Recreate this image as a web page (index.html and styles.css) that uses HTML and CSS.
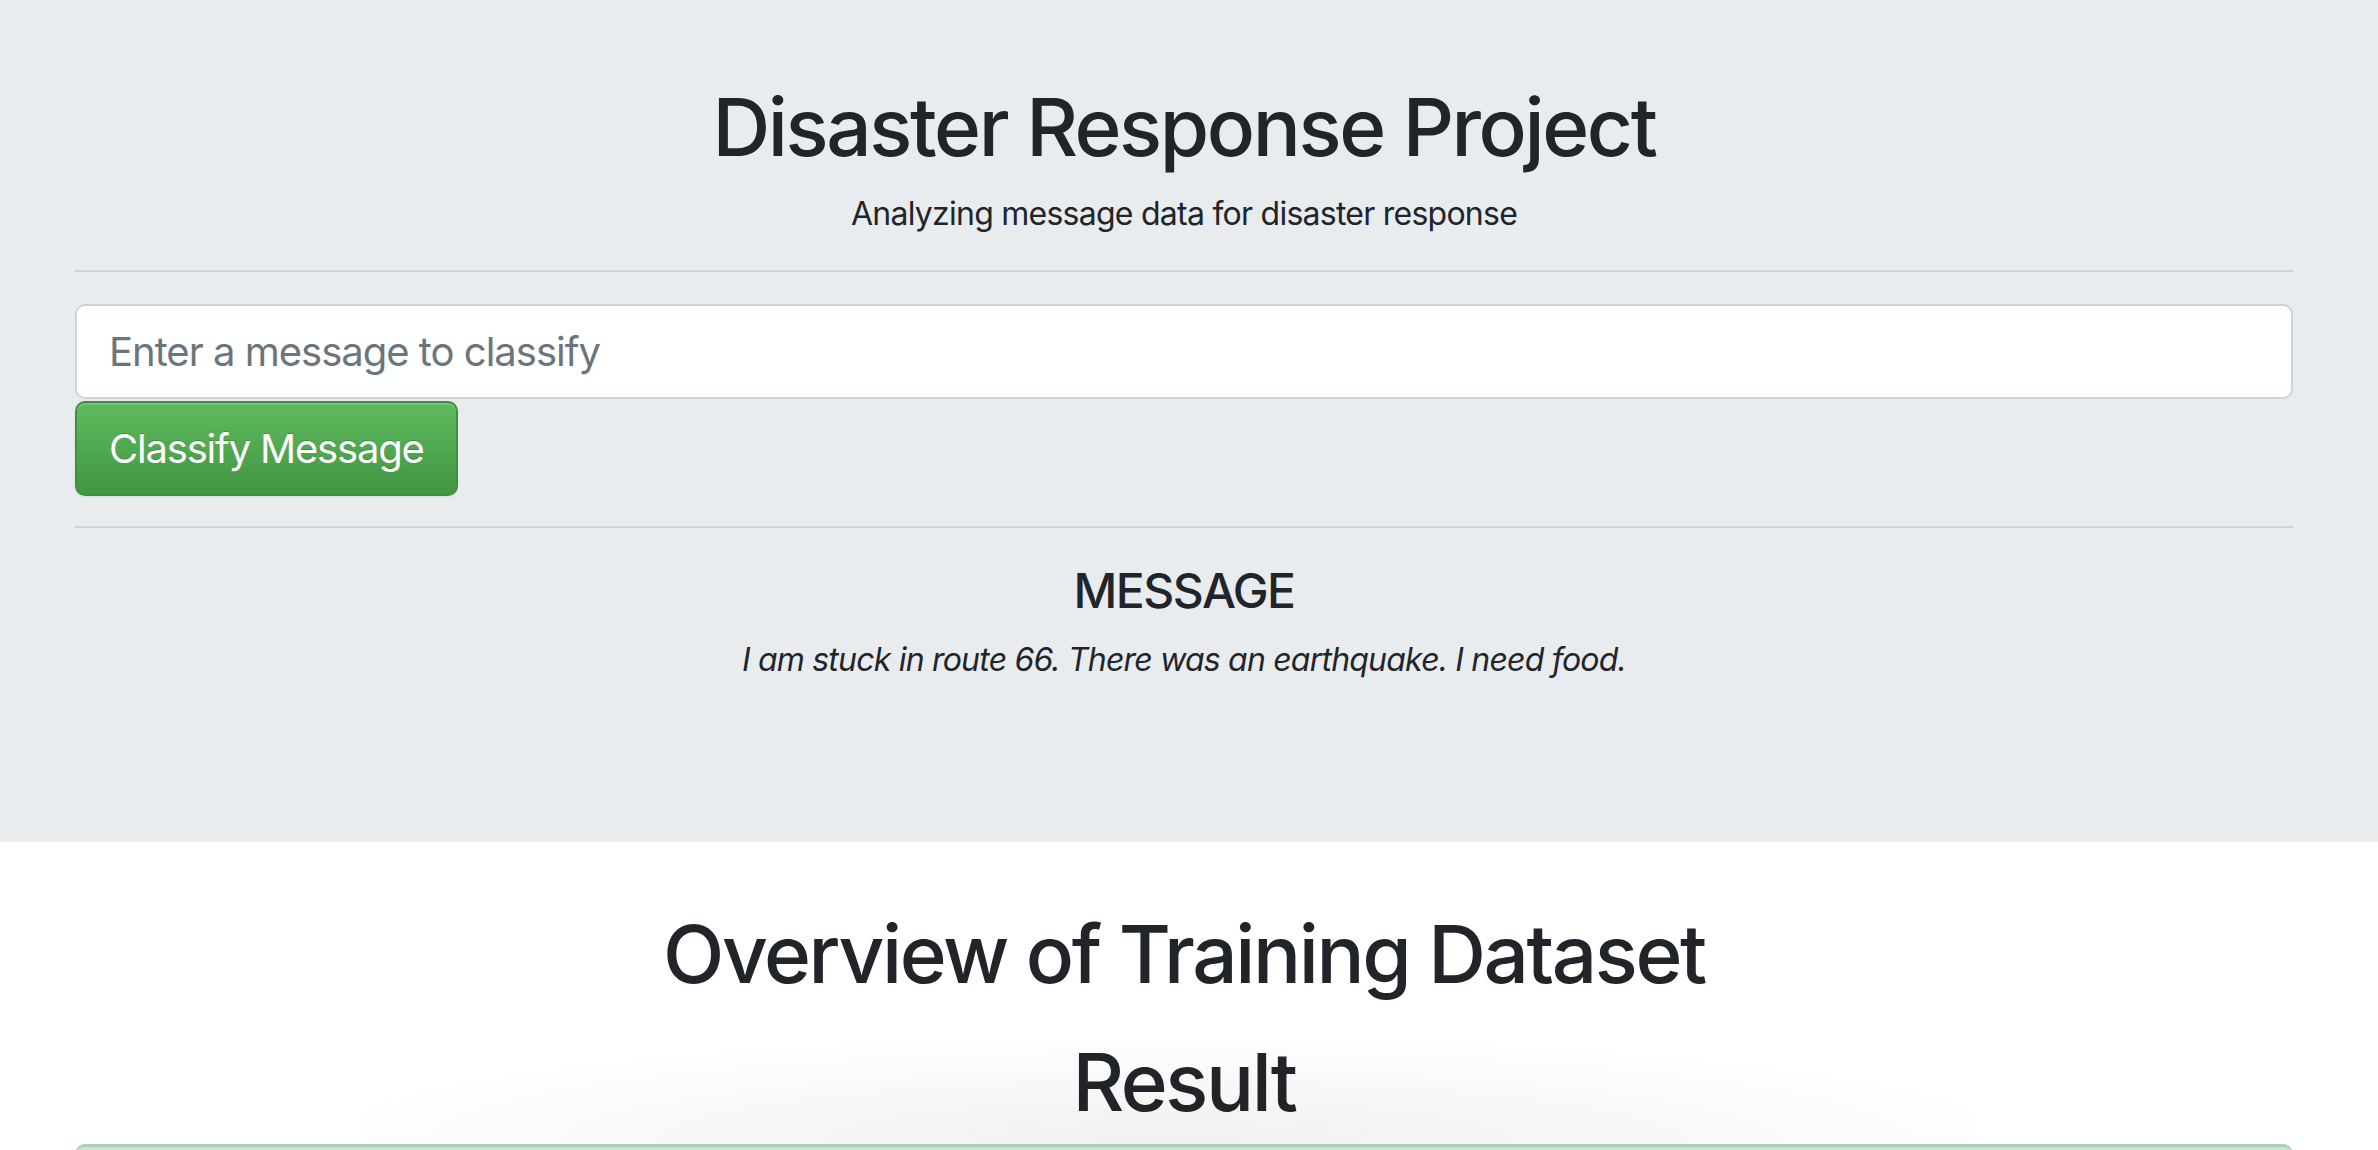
FILE: index.html
```html
<!DOCTYPE html>
<html lang="en">
<head>
<meta charset="utf-8">
<title>Disaster Response Project</title>
<link rel="stylesheet" href="styles.css">
</head>
<body>
<header class="jumbotron">
  <div class="container">
    <h1 class="title">Disaster Response Project</h1>
    <p class="lead">Analyzing message data for disaster response</p>
    <hr class="rule">
    <form class="classify-form">
      <input class="form-input" type="text" name="query" placeholder="Enter a message to classify">
      <button class="btn-success" type="button">Classify Message</button>
    </form>
    <hr class="rule rule-bottom">
    <h4 class="msg-label">MESSAGE</h4>
    <p class="msg-text">I am stuck in route 66. There was an earthquake. I need food.</p>
  </div>
</header>
<main class="container main">
  <h1 class="section-title">Overview of Training Dataset</h1>
  <h1 class="section-title result-title">Result</h1>
  <div class="result-wrap">
    <div class="shadow-glow"></div>
    <div class="alert-success"></div>
  </div>
</main>
</body>
</html>
```

FILE: styles.css
```css
* { box-sizing: border-box; }
html, body { margin: 0; padding: 0; }
body {
  font-family: Inter, "Noto Sans", "Liberation Sans", sans-serif;
  font-size: 32px;
  line-height: 1.5;
  color: #212529;
  background: #fff;
  overflow: hidden;
}
.container {
  padding-left: 75px;
  padding-right: 85px;
}
.jumbotron {
  background: #e9ecef;
  height: 842px;
  padding-top: 79px;
}
.title {
  margin: 0;
  text-align: center;
  font-size: 80px;
  font-weight: 500;
  line-height: 1.2;
  letter-spacing: -2.4px;
}
.lead {
  margin: 15px 0 0;
  text-align: center;
  font-size: 32px;
  line-height: 48px;
  letter-spacing: -0.75px;
}
.rule {
  margin: 32px 0 0;
  border: 0;
  border-top: 2px solid rgba(0,0,0,0.1);
  height: 0;
}
.classify-form {
  display: flex;
  flex-direction: column;
  align-items: flex-start;
  gap: 2px;
  margin-top: 32px;
}
.form-input {
  display: block;
  width: 100%;
  height: 95px;
  padding: 16px 32px;
  font-family: inherit;
  font-size: 40px;
  letter-spacing: -1px;
  color: #495057;
  background: #fff;
  border: 2px solid #ced4da;
  border-radius: 10px;
  outline: none;
}
.form-input::placeholder { color: #6c757d; }
.btn-success {
  height: 95px;
  padding: 0 32px;
  font-family: inherit;
  font-size: 40px;
  letter-spacing: -1.2px;
  color: #fff;
  background: linear-gradient(to bottom, #5fba5f 0%, #419641 100%);
  border: 2px solid #3e8f3e;
  border-radius: 10px;
  text-shadow: 0 -1px 0 rgba(0,0,0,0.2);
  box-shadow: inset 0 2px 0 rgba(255,255,255,0.15), 0 1px 2px rgba(0,0,0,0.075);
  cursor: pointer;
}
.rule-bottom { margin-top: 30px; }
.msg-label {
  margin: 34px 0 0;
  text-align: center;
  font-size: 48px;
  font-weight: 500;
  line-height: 1.2;
  letter-spacing: -1.5px;
}
.msg-text {
  margin: 16px 0 0;
  text-align: center;
  font-style: italic;
  font-size: 32px;
  letter-spacing: -0.8px;
}
.main { padding-top: 64px; }
.section-title {
  margin: 0;
  text-align: center;
  font-size: 80px;
  font-weight: 500;
  line-height: 1.2;
  letter-spacing: -2.4px;
}
.result-title { margin-top: 32px; }
.result-wrap {
  position: relative;
  margin-top: 14px;
}
.shadow-glow {
  position: absolute;
  left: 289px;
  right: 320px;
  top: -110px;
  height: 110px;
  background: radial-gradient(ellipse 55% 100% at 50% 100%, rgba(0,0,0,0.06) 0%, rgba(0,0,0,0.03) 50%, rgba(0,0,0,0) 100%);
}
.alert-success {
  position: relative;
  height: 120px;
  background: #c8e6cd;
  border-top: 3px solid #acd0b3;
  border-radius: 10px 10px 0 0;
}
```
